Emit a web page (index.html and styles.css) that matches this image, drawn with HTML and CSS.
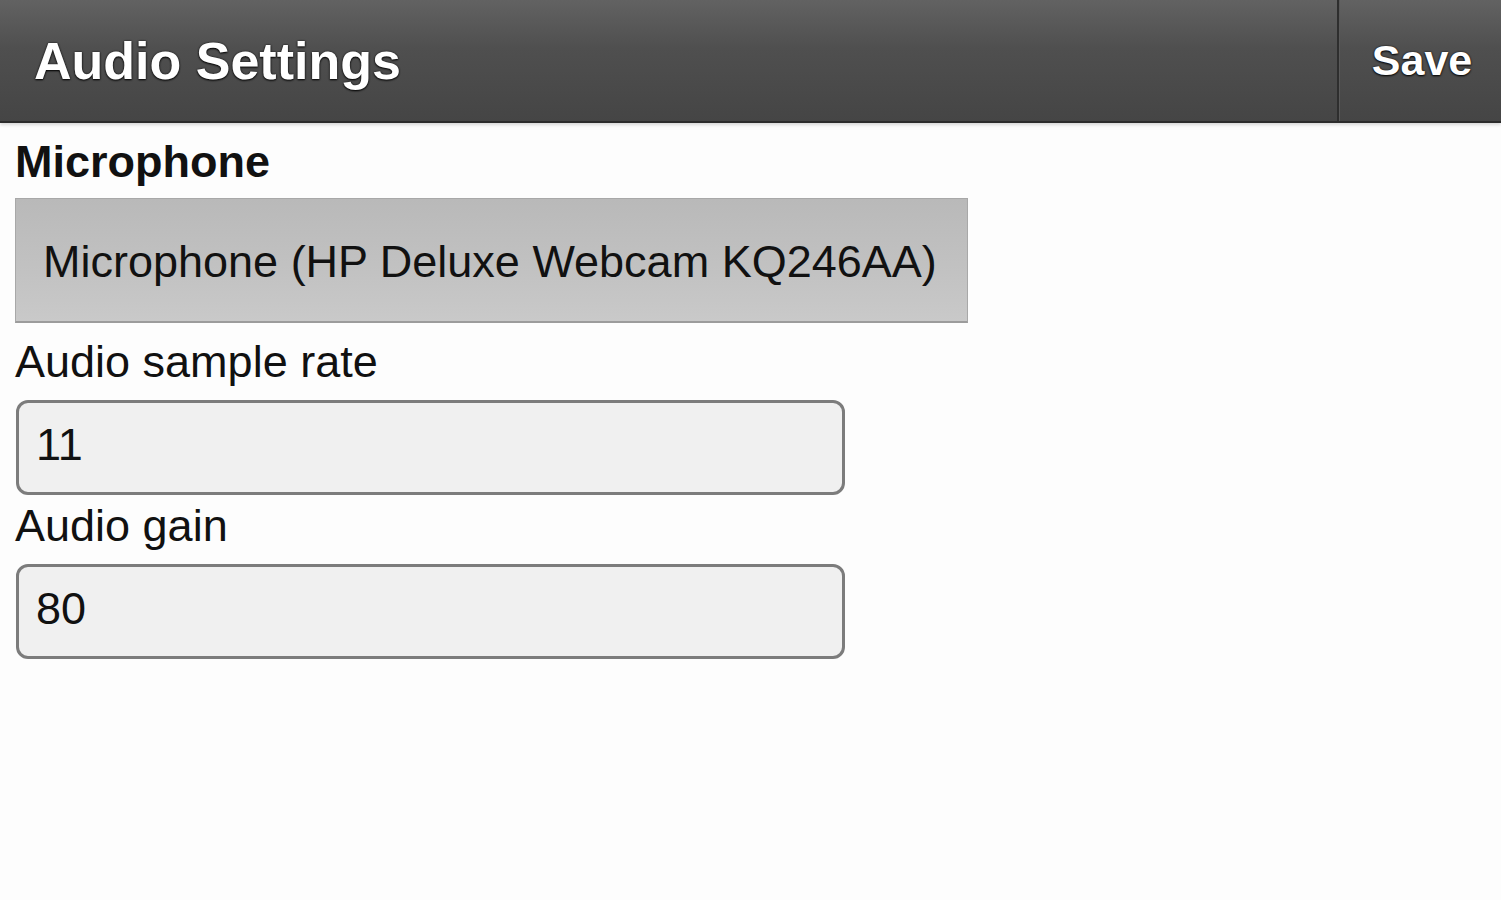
FILE: index.html
```html
<!DOCTYPE html>
<html lang="en">
<head>
    <meta charset="UTF-8">
    <meta name="viewport" content="width=device-width, initial-scale=1.0">
    <title>Audio Settings</title>
    <link rel="stylesheet" href="styles.css">
</head>
<body>
    <div class="header">
        <h1 class="title">Audio Settings</h1>
        <button class="save-btn">Save</button>
    </div>

    <div class="content">
        <label class="label label-bold" for="micSelect">Microphone</label>
        <div id="micSelect" class="select-box">Microphone (HP Deluxe Webcam KQ246AA)</div>

        <label class="label" for="rateInput">Audio sample rate</label>
        <input id="rateInput" class="text-input input-first" type="text" value="11">

        <label class="label" for="gainInput">Audio gain</label>
        <input id="gainInput" class="text-input" type="text" value="80">
    </div>
</body>
</html>
```

FILE: styles.css
```css
* {
    margin: 0;
    padding: 0;
    box-sizing: border-box;
}

body {
    font-family: "Liberation Sans", Arial, sans-serif;
    background: #fdfdfd;
    color: #111;
    min-height: 100vh;
}

.header {
    display: flex;
    height: 123px;
    background: linear-gradient(to bottom, #626262 0%, #4f4f4f 40%, #454545 100%);
    border-bottom: 2px solid #2c2c2c;
    box-shadow: 0 2px 3px rgba(0, 0, 0, 0.15);
}

.title {
    flex: 1;
    display: flex;
    align-items: center;
    padding-left: 34px;
    font-size: 52px;
    font-weight: 700;
    color: #fff;
    text-shadow: 0 0 2px #111, 0 1px 2px #000;
}

.save-btn {
    width: 164px;
    border: none;
    border-left: 2px solid #2e2e2e;
    box-shadow: inset 1px 0 0 #595959;
    background: transparent;
    font-family: inherit;
    font-size: 43px;
    font-weight: 700;
    color: #fff;
    text-shadow: 0 0 2px #111, 0 1px 2px #000;
    padding-left: 4px;
    cursor: pointer;
}

.content {
    display: flex;
    flex-direction: column;
    align-items: flex-start;
    padding: 13px 15px 0;
}

.label {
    font-size: 45px;
    line-height: 52px;
    color: #111;
}

.label-bold {
    font-weight: 700;
    margin-bottom: 10px;
}

.select-box {
    width: 953px;
    height: 125px;
    display: flex;
    align-items: center;
    padding: 4px 0 0 27px;
    font-size: 45px;
    color: #111;
    background: linear-gradient(to bottom, #b9b9b9 0%, #c2c2c2 60%, #c9c9c9 100%);
    border: 1px solid #a8a8a8;
    border-bottom: 2px solid #9c9c9c;
    margin-bottom: 13px;
}

.text-input {
    width: 829px;
    height: 95px;
    margin: 12px 0 0 1px;
    padding: 0 0 5px 17px;
    font-family: inherit;
    font-size: 45px;
    color: #111;
    background: #f0f0f0;
    border: 3px solid #7c7c7c;
    border-radius: 12px;
    outline: none;
}

.input-first {
    margin-bottom: 5px;
}
```
